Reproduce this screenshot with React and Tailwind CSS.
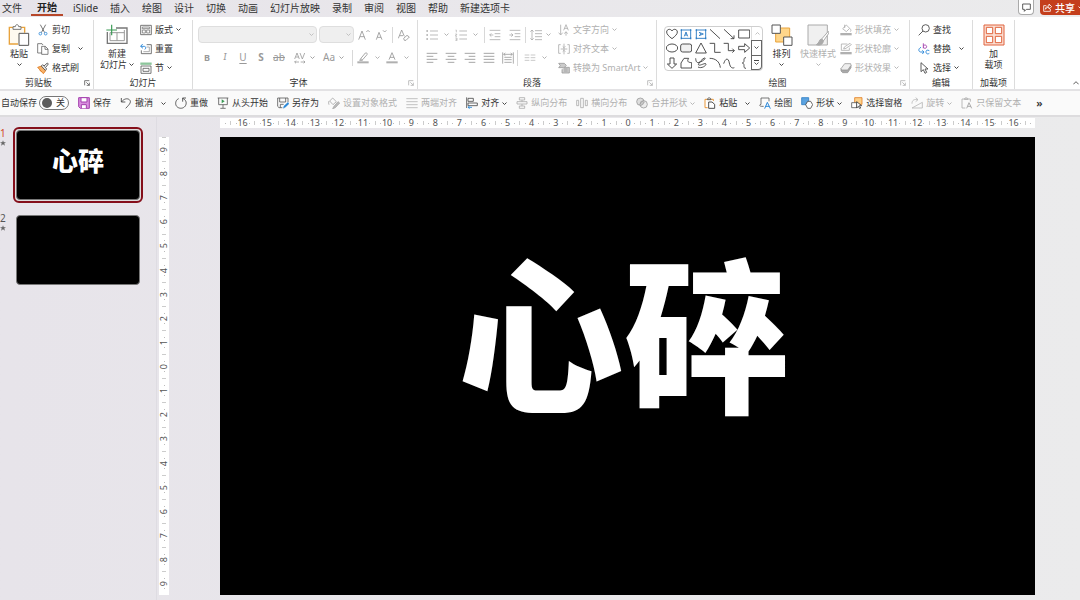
import { useState } from 'react';

// Small icons, drawn on a 36 x 36 grid
const ICONS = {
  cut: (
    <g fill="none" strokeWidth="2.4">
      <path d="M10 2l13 24M26 2L13 26" stroke="#555" />
      <circle cx="10" cy="29" r="4" stroke="#2b88d8" />
      <circle cx="26" cy="29" r="4" stroke="#2b88d8" />
    </g>
  ),
  copy: (
    <g fill="#fff" stroke="#555" strokeWidth="2.2">
      <path d="M16 30H2V2h13l3 4" />
      <path d="M14 10h11l8 8v16H14zM24 10v9h9" />
    </g>
  ),
  brush: (
    <g strokeLinejoin="round" strokeWidth="2.6">
      <path d="M2 16l12-4 12 14-7 9z" fill="#f7b26a" stroke="#e07b1f" />
      <path d="M8 24l6 6" stroke="#e07b1f" />
      <path d="M13 12l4-4 12 13-4 4z" fill="#fff" stroke="#444" />
      <path d="M21 12l10-9 3 3-8 10" fill="#fff" stroke="#444" />
    </g>
  ),
  layout: (
    <g fill="none" stroke="#555" strokeWidth="2.4">
      <path d="M2 4h32v28H2z" />
      <path d="M7 9h22v5H7zM7 18h9v9H7zM20 18h9v9h-9z" stroke="#777" />
    </g>
  ),
  reset: (
    <g fill="none" strokeWidth="2.4">
      <path d="M20 5h14v27H4V22" stroke="#555" />
      <path d="M20 12h8v14H10" stroke="#999" />
      <path d="M2 10h11c5 0 6 8 1 9M8 3L2 10l7 6" stroke="#2b88d8" strokeWidth="2.8" />
    </g>
  ),
  section: (
    <g fill="none" strokeWidth="2.4">
      <path d="M1 5h34" stroke="#8cc59b" strokeWidth="7" />
      <path d="M3 12h30v22H3zM9 19h18v9H9z" stroke="#555" />
    </g>
  ),
  save: (
    <g stroke="#a33fae" strokeWidth="3">
      <path d="M2 2h32v32H7l-5-5z" fill="#d98fdf" />
      <path d="M9 2h18v13H9zM10 34V23h15v11" fill="#fff" />
    </g>
  ),
  undo: <path d="M4 3v12h12M4 15C12 5 22 3 28 8c7 6 2 13-11 26" fill="none" stroke="#444" strokeWidth="2.6" />,
  redo: <path d="M33 3H23v11M23 4c9 4 13 12 9 21-4 8-14 11-22 7S0 19 4 11c2-3 4-5 7-6" fill="none" stroke="#444" strokeWidth="2.6" />,
  play: (
    <g fill="none" stroke="#555" strokeWidth="2.4">
      <path d="M2 3h32M5 3v20h26V3M18 23v10M10 34h16" />
      <path d="M14 7l9 6-9 6z" fill="#3a9a55" stroke="none" />
    </g>
  ),
  saveAs: (
    <g fill="none" strokeWidth="2.4">
      <path d="M16 32H6l-4-4V3h31v12" stroke="#555" />
      <path d="M8 3v12h18V3M10 32V22h10" stroke="#555" />
      <path d="M19 34l2-7 12-11 3 4-11 11z" fill="#2b88d8" stroke="#2b88d8" strokeWidth="1" />
    </g>
  ),
  format: (
    <g fill="none" stroke="#aaa" strokeWidth="2.6">
      <path d="M5 12l9-9 11 11-10 9zM3 12c-2 5-1 8 0 11" />
      <path d="M18 28l12-14 5 4-13 14-8 3z" fill="#bbb" />
    </g>
  ),
  justify: <path d="M1 5h34M1 14h34M1 23h34M1 32h34" stroke="#b4b4b4" strokeWidth="2.4" />,
  align: (
    <g fill="none" strokeWidth="2.4">
      <path d="M2 1v32M6 4h16v9H6zM6 18h28v8H6z" stroke="#444" />
      <path d="M18 31H6M11 27l-5 4 5 4" stroke="#2b88d8" strokeWidth="2.6" />
    </g>
  ),
  distV: <path d="M10 2h16v7H10zM3 14h30v7H3zM10 27h16v7H10zM18 9v5M18 21v6" fill="none" stroke="#aaa" strokeWidth="2.4" />,
  distH: <path d="M2 10h6v16H2zM14 4h8v28h-8zM28 10h6v16h-6z" fill="none" stroke="#aaa" strokeWidth="2.4" />,
  merge: (
    <g fill="#ddd" stroke="#999" strokeWidth="2.4">
      <circle cx="13" cy="14" r="11" />
      <circle cx="23" cy="22" r="11" fillOpacity=".5" />
      <path d="M23 11L12 22M25 15L15 26" fill="none" />
    </g>
  ),
  paste: (
    <g fill="#fff" strokeWidth="2.8">
      <path d="M11 32H3V7h25v5" stroke="#e8912d" />
      <path d="M10 8c0-7 11-7 11 0z" stroke="#555" />
      <path d="M14 15h10l8 7v12H14z" stroke="#444" />
    </g>
  ),
  drawBox: (
    <g fill="none" strokeWidth="2.4">
      <path d="M14 28H7c-6 0-6-6-1-6V3h24v10" stroke="#555" />
      <path d="M17 35l8-19 9 19M20 28h11" stroke="#2b88d8" strokeWidth="3" />
    </g>
  ),
  shape: (
    <g strokeWidth="2.4">
      <path d="M2 2h21v21H2z" fill="#5ba3e0" stroke="#2b7cc4" />
      <path d="M20 13h9l6 10-6 11h-9l-6-11z" fill="#fff" stroke="#444" strokeLinejoin="round" />
    </g>
  ),
  pane: (
    <g strokeWidth="2.4">
      <path d="M11 2h22v20H11z" fill="#ffd28a" stroke="#e07b1f" />
      <path d="M2 17h16v15H2z" fill="#fff" stroke="#555" />
      <path d="M17 14v19l5-5 4 7 3-2-4-7h7z" fill="#fff" stroke="#333" />
    </g>
  ),
  rotate: (
    <g fill="none" stroke="#b4b4b4" strokeWidth="2.4">
      <path d="M3 33L34 16v17z" />
      <path d="M3 20C3 9 10 6 20 8M14 2l7 6-7 6" />
    </g>
  ),
  pasteText: (
    <g fill="none" stroke="#aaa" strokeWidth="2.4">
      <path d="M13 33H3V6h25v8M10 7c0-6 11-6 11 0z" />
      <path d="M17 34l7-17 8 17M20 28h10" strokeWidth="3" />
    </g>
  ),
  textDir: (
    <g fill="none" stroke="#aaa" strokeWidth="2.4">
      <path d="M8 2v30M2 26l6 7 6-7" />
      <path d="M17 19l7-17 7 17M19 13h10M24 24v11M19 29l5-6 5 6" />
    </g>
  ),
  alignText: (
    <g fill="none" stroke="#aaa" strokeWidth="2.4">
      <path d="M8 5H2v26h6M28 5h6v26h-6M8 18h20M18 2v32M14 10l4 4 4-4M14 26l4-4 4 4" />
    </g>
  ),
  smartArt: (
    <g fill="#ccc" stroke="#999" strokeWidth="2.4">
      <path d="M2 4h17l6 6-6 7H2l5-6z" />
      <path d="M17 16h17v17H12V22" />
      <path d="M18 21h11M18 27h11" />
    </g>
  ),
  fill: (
    <g fill="none" stroke="#aaa" strokeWidth="2.4">
      <path d="M8 14L19 3l10 10-10 10zM14 2v10M30 14c4 4 3 7 1 9" />
      <path d="M1 27h34v7H1z" fill="#b0b0b0" stroke="none" />
    </g>
  ),
  outline: (
    <g fill="none" stroke="#aaa" strokeWidth="2.4">
      <path d="M28 14v8H4V3h18M11 18l2-6L30 1l4 4-16 11z" />
      <path d="M1 27h34v7H1z" fill="#b0b0b0" stroke="none" />
    </g>
  ),
  effect: (
    <g fill="#eee" stroke="#999" strokeWidth="2.4" strokeLinejoin="round">
      <path d="M3 20v7l5 5h15l10-15v-7L23 25H8z" fill="#aaa" />
      <path d="M14 5h18l1 5-10 14H5l-2-4z" />
    </g>
  ),
  find: <path d="M34 13a11 11 0 1 1-22 0 11 11 0 1 1 22 0M15 21L2 34" fill="none" stroke="#444" strokeWidth="2.6" />,
  replace: (
    <g fill="none" strokeWidth="2.8">
      <path d="M16 1v15M16 9c3-5 10-3 10 2s-7 7-10 2" stroke="#a33fae" />
      <path d="M34 23c-7-4-11 0-10 5s6 6 10 3" stroke="#2b88d8" />
      <path d="M9 13C0 17 1 26 8 27h9M13 22l5 5-5 6" stroke="#2b88d8" />
    </g>
  ),
  select: <path d="M9 2v27l7-6 5 11 5-3-5-10h9z" fill="none" stroke="#444" strokeWidth="2.6" strokeLinejoin="round" />,
  bullets: (
    <g stroke="#aaa" strokeWidth="2.4">
      <path d="M12 6h24M12 18h24M12 30h24" />
      <path d="M1 6h5M1 18h5M1 30h5" strokeWidth="5" />
    </g>
  ),
  numbers: (
    <g stroke="#aaa" strokeWidth="2.4" fill="none">
      <path d="M13 6h23M13 18h23M13 30h23" />
      <path d="M2 3h2v7M1 15h4v3H2v4h4M1 27h5v8H1M2 31h4" strokeWidth="2" />
    </g>
  ),
  outdent: <path d="M2 4h32M17 14h17M17 23h17M2 32h32M13 18H2M7 13l-5 5 5 5" fill="none" stroke="#aaa" strokeWidth="2.4" />,
  indent: <path d="M2 4h32M17 14h17M17 23h17M2 32h32M1 18h11M7 13l5 5-5 5" fill="none" stroke="#aaa" strokeWidth="2.4" />,
  spacing: <path d="M15 5h21M15 14h21M15 23h21M15 32h21M6 3v30M1 8l5-5 5 5M1 28l5 5 5-5" fill="none" stroke="#aaa" strokeWidth="2.4" />,
  left: <path d="M2 4h32M2 13h20M2 22h32M2 31h20" stroke="#999" strokeWidth="2.6" />,
  center: <path d="M2 4h32M8 13h20M2 22h32M8 31h20" stroke="#999" strokeWidth="2.6" />,
  right: <path d="M2 4h32M14 13h20M2 22h32M14 31h20" stroke="#999" strokeWidth="2.6" />,
  full: <path d="M2 4h32M2 13h32M2 22h32M2 31h32" stroke="#999" strokeWidth="2.6" />,
  spread: <path d="M2 1v34M34 1v34M5 7h26M10 3L5 7l5 4M26 3l5 4-5 4M7 16h22M7 23h22M7 31h22" fill="none" stroke="#999" strokeWidth="2.4" />,
  columns: <path d="M2 9h14M2 17h14M2 25h14M20 9h14M20 17h14M20 25h14" stroke="#bbb" strokeWidth="2.4" />,
  grow: <path d="M2 32L12 6l10 26M6 23h13M25 9l5-5 5 5" fill="none" stroke="#999" strokeWidth="2.6" />,
  shrink: <path d="M4 32l8-22 9 22M7 25h11M24 4l5 5 5-5" fill="none" stroke="#999" strokeWidth="2.6" />,
  clear: (
    <g fill="none" stroke="#999" strokeWidth="2.6">
      <path d="M1 28L11 3l8 19M5 20h10" />
      <path d="M17 28l10-9 7 5-10 10h-5z" />
    </g>
  ),
  highlight: (
    <g fill="none" stroke="#999" strokeWidth="2.6">
      <path d="M11 21l-3 4h9M11 20L25 3c3-2 7 1 5 5L17 23z" />
      <path d="M1 28h34v6H1z" fill="#b0b0b0" stroke="none" />
    </g>
  ),
  fontColor: (
    <g fill="none" stroke="#999" strokeWidth="2.6">
      <path d="M9 23l9-21 9 21M12 16h12" />
      <path d="M1 28h34v6H1z" fill="#b0b0b0" stroke="none" />
    </g>
  ),
  charSpacing: <path d="M2 21L9 3l7 18M5 15h9M18 3l7 18 7-18M2 30h13M6 26l-4 4 4 4M20 30h13M29 26l4 4-4 4" fill="none" stroke="#999" strokeWidth="2.4" />,
};

const SHAPES = [
  <path d="M18 32C8 24 2 19 2 12 2 3 14 1 18 9c4-8 16-6 16 3 0 7-6 12-16 20z" />,
  <g stroke="#2b7cc4"><path d="M4 6h28v25H4zM13 25l5-13 5 13M15 21h6" /><path d="M2 6h4M30 6h4M2 31h4M30 31h4" strokeWidth="5" /></g>,
  <g stroke="#2b7cc4"><path d="M4 6h28v25H4zM12 13l13 5-13 5M16 15v6" /><path d="M2 6h4M30 6h4M2 31h4M30 31h4" strokeWidth="5" /></g>,
  <path d="M3 4l30 28" />,
  <path d="M3 4l30 28M33 22v10H23" />,
  <path d="M2 6h33v24H2z" />,
  <ellipse cx="18" cy="18" rx="17" ry="12" />,
  <rect x="2" y="6" width="33" height="24" rx="6" fill="#f1f1f1" />,
  <path d="M18 3l16 30H2z" />,
  <path d="M2 4h15v27h18" />,
  <path d="M2 4h14v22h18M28 20l6 6-6 6" />,
  <path d="M2 13h18V5l15 13-15 13v-8H2z" />,
  <path d="M12 3h12v18h8L18 34 4 21h8z" />,
  <path d="M3 33V18L12 4h14c-5 8-4 12 9 13v16z" />,
  <path d="M2 4c1 12 4 15 14 11S34 3 29 3 7 21 11 24s21-8 22-3-14 15-24 9" />,
  <path d="M2 4c18 0 30 10 32 28" />,
  <path d="M2 20C8 2 16 2 19 18s10 16 15 14" />,
  <path d="M24 2c-6 0-6 3-6 8s-1 7-5 8c4 1 5 3 5 8s0 8 6 8" />,
];

const Icon = ({ name }) => (
  <svg viewBox="0 0 36 36" className="h-3 w-3 shrink-0">{ICONS[name]}</svg>
);

const Chevron = ({ up }) => (
  <svg viewBox="0 0 10 6" className="h-[3px] w-[5px] shrink-0" fill="none" stroke="currentColor" strokeWidth="1.8">
    <path d={up ? 'M1 5l4-4 4 4' : 'M1 1l4 4 4-4'} />
  </svg>
);

const Divider = () => <span className="h-4 w-px shrink-0 bg-[#d8d8d8]" />;

// Icon with text beside it; "split" puts the arrow further away
function SmallButton({ icon, text, arrow, split, disabled, className = '' }) {
  return (
    <button
      disabled={disabled}
      className={`flex h-[19px] shrink-0 items-center gap-[3px] whitespace-nowrap ${disabled ? 'text-[#b0b0b0]' : 'text-[#333]'} ${className}`}
    >
      <Icon name={icon} />
      <span>{text}</span>
      {split && <span className="w-0.5" />}
      {(arrow || split) && <Chevron />}
    </button>
  );
}

function IconButton({ icon, label, arrow }) {
  return (
    <button disabled aria-label={label} className="flex shrink-0 items-center gap-1.5 text-[#aaa]">
      <Icon name={icon} />
      {arrow && <Chevron />}
    </button>
  );
}

function Group({ title, launcher, muted, className, children }) {
  return (
    <section className={`flex shrink-0 flex-col border-r border-[#dcdcdc] ${className}`}>
      <div className="flex h-[57px]">{children}</div>
      <div className="flex h-3 items-center leading-3">
        <span className="flex-1 text-center">{title}</span>
        {launcher && (
          <button aria-label={`${title}设置`} className={`flex w-[18px] justify-end pr-[3px] ${muted ? 'text-[#b0b0b0]' : 'text-[#555]'}`}>
            <svg viewBox="0 0 18 18" className="h-1.5 w-1.5" fill="none" stroke="currentColor" strokeWidth="2.4">
              <path d="M2 16V2h14M7 7l9 9M16 8v8H8" />
            </svg>
          </button>
        )}
      </div>
    </section>
  );
}

function LargeButton({ icon, lines, arrow, inlineArrow, disabled, className }) {
  return (
    <button
      disabled={disabled}
      className={`flex shrink-0 flex-col items-center self-start pt-1 leading-[11px] whitespace-nowrap ${disabled ? 'text-[#b0b0b0]' : 'text-[#333]'} ${className}`}
    >
      {icon}
      <span className="mt-0.5">{lines[0]}</span>
      {lines[1] && (
        <span className="flex items-center gap-0.5">
          {lines[1]}
          {inlineArrow && <Chevron />}
        </span>
      )}
      {arrow && <span className="flex h-[11px] items-center"><Chevron /></span>}
    </button>
  );
}

const pasteIcon = (
  <svg viewBox="0 0 66 66" className="h-[22px] w-[22px]" fill="#fff" strokeWidth="3">
    <path d="M30 60H4V10h46v16" fill="#fffaf0" stroke="#e8a33d" strokeWidth="4" />
    <path d="M15 16v-8h7c0-8 10-8 10 0h7v8z" stroke="#777" />
    <path d="M33 28h29v36H33z" stroke="#555" />
  </svg>
);

const newSlideIcon = (
  <svg viewBox="0 0 66 66" className="h-[22px] w-[22px]" fill="none" strokeWidth="3">
    <path d="M4 24v34h59V12H30" stroke="#777" strokeWidth="4" />
    <path d="M12 26h43M12 26v24h43V18M33 26v24" stroke="#999" />
    <path d="M17 2v32M1 18h32" stroke="#3a9a55" strokeWidth="3.5" />
  </svg>
);

const arrangeIcon = (
  <svg viewBox="0 0 66 66" className="h-[22px] w-[22px]" fill="#fff" strokeWidth="3">
    <path d="M14 12h42v42H14z" fill="#ffd68a" stroke="#e8a33d" />
    <path d="M3 3h25v25H3zM38 39h25v25H38z" stroke="#555" />
  </svg>
);

const styleIcon = (
  <svg viewBox="0 0 66 66" className="h-[22px] w-[22px]" fill="#eee" stroke="#aaa" strokeWidth="3">
    <path d="M3 3h58v60H3z" fill="#f0f0f0" />
    <path d="M64 22L44 45l5 6 17-24z" fill="#fff" />
    <path d="M44 45c-8 0-6 12-16 17 12 4 20-2 21-11z" fill="#aaa" />
  </svg>
);

const addInIcon = (
  <svg viewBox="0 0 66 66" className="h-[22px] w-[22px]" fill="#fff" stroke="#e0633c" strokeWidth="3">
    <path d="M3 3h60v60H3z" fill="#fbe0d5" />
    <path d="M10 10h19v19H10zM37 10h19v19H37zM10 37h19v19H10zM37 37h19v19H37z" />
  </svg>
);

const TABS = ['iSlide', '插入', '绘图', '设计', '切换', '动画', '幻灯片放映', '录制', '审阅', '视图', '帮助', '新建选项卡'];

function TabBar() {
  return (
    <header className="flex h-[17px] items-start justify-between text-[10px] leading-[14px] text-[#333]">
      <nav className="flex whitespace-nowrap">
        <button className="mr-[9px] ml-0.5">文件</button>
        <button className="mr-1 h-4 border-b-2 border-[#b7472a] px-1.5 font-bold text-[#222]">开始</button>
        {TABS.map((tab) => (
          <button key={tab} className="px-1.5">{tab}</button>
        ))}
      </nav>
      <div className="flex shrink-0 gap-1.5">
        <button aria-label="批注" className="flex h-[15px] w-4 items-center justify-center rounded-b border border-t-0 border-[#aaa] bg-white">
          <svg viewBox="0 0 27 27" className="h-[9px] w-[9px]" fill="none" stroke="#444" strokeWidth="2.6">
            <path d="M2 3h23v16H13l-6 6v-6H2z" />
          </svg>
        </button>
        <button className="flex h-[15px] w-10 items-center gap-[3px] overflow-hidden rounded-bl bg-[#c43e1c] pl-[3px] font-medium whitespace-nowrap text-white">
          <svg viewBox="0 0 27 27" className="h-[9px] w-[9px] shrink-0" fill="none" stroke="#fff" strokeWidth="2.4">
            <path d="M10 8H2v17h20v-7M7 19c1-8 6-10 11-10V3l8 8-8 7v-5c-5 0-8 1-11 6z" />
          </svg>
          <span>共享</span>
          <Chevron />
        </button>
      </div>
    </header>
  );
}

function FontGroup() {
  return (
    <Group title="字体" launcher muted className="w-[225px] pl-[5px]">
      <div className="flex flex-col gap-1.5 pt-1.5 text-[#999]">
        <div className="flex h-[17px] items-center gap-0.5">
          <label className="flex h-[17px] w-[119px] items-center rounded border border-[#dedede] bg-[#efefef] pr-0.5 text-[#bbb]">
            <select disabled aria-label="字体" className="min-w-0 flex-1 appearance-none" />
            <Chevron />
          </label>
          <label className="flex h-[17px] w-[35px] items-center rounded border border-[#dedede] bg-[#efefef] pr-0.5 text-[#bbb]">
            <select disabled aria-label="字号" className="min-w-0 flex-1 appearance-none" />
            <Chevron />
          </label>
          <div className="flex items-center gap-[5px] pl-0.5">
            <IconButton icon="grow" label="增大字号" />
            <IconButton icon="shrink" label="减小字号" />
            <Divider />
            <IconButton icon="clear" label="清除格式" />
          </div>
        </div>
        <div className="flex h-[17px] items-center">
          <button disabled className="w-[18px] font-bold">B</button>
          <button disabled className="w-[18px] font-serif text-[10px] italic">I</button>
          <button disabled className="w-[18px] text-[10px] underline underline-offset-2">U</button>
          <button disabled className="w-[18px] text-[10px] font-bold">S</button>
          <button disabled className="w-[18px] text-[10px] line-through">ab</button>
          <div className="flex items-center gap-2 pl-1.5">
            <button disabled aria-label="字符间距" className="flex items-center gap-1">
              <Icon name="charSpacing" />
              <Chevron />
            </button>
            <button disabled className="flex items-center gap-1">
              <span className="text-[10px]">Aa</span>
              <Chevron />
            </button>
            <Divider />
          </div>
          <div className="flex items-center gap-1.5 pl-1">
            <IconButton icon="highlight" label="突出显示" arrow />
            <IconButton icon="fontColor" label="字体颜色" arrow />
          </div>
        </div>
      </div>
    </Group>
  );
}

function ParagraphGroup() {
  return (
    <Group title="段落" launcher muted className="w-[239px] pl-2">
      <div className="flex w-[132px] flex-col gap-1.5 pt-1.5">
        <div className="flex h-[17px] items-center gap-1">
          <div className="flex items-center gap-1.5">
            <IconButton icon="bullets" label="项目符号" arrow />
            <IconButton icon="numbers" label="编号" arrow />
            <Divider />
          </div>
          <IconButton icon="outdent" label="减少缩进" />
          <div className="flex items-center gap-1 pl-1">
            <IconButton icon="indent" label="增加缩进" />
            <Divider />
            <button disabled aria-label="行距" className="flex items-center gap-1 text-[#aaa]">
              <Icon name="spacing" />
              <Chevron />
            </button>
          </div>
        </div>
        <div className="flex h-[17px] items-center gap-[7px]">
          <IconButton icon="left" label="左对齐" />
          <IconButton icon="center" label="居中" />
          <IconButton icon="right" label="右对齐" />
          <IconButton icon="full" label="两端对齐" />
          <IconButton icon="spread" label="分散对齐" />
          <div className="-ml-1 flex items-center gap-1.5">
            <Divider />
            <IconButton icon="columns" label="分栏" arrow />
          </div>
        </div>
      </div>
      <div>
        <SmallButton icon="textDir" text="文字方向" arrow disabled />
        <SmallButton icon="alignText" text="对齐文本" arrow disabled />
        <SmallButton icon="smartArt" text="转换为 SmartArt" arrow disabled />
      </div>
    </Group>
  );
}

function DrawingGroup() {
  return (
    <Group title="绘图" launcher muted className="w-[253px] pl-[7px]">
      <div className="mt-1.5 flex h-[45px] w-[99px] rounded border border-[#cfcfcf]">
        <div className="grid flex-1 grid-cols-6 place-items-center">
          {SHAPES.map((shape, i) => (
            <svg key={i} viewBox="0 0 36 36" className="h-3 w-3" fill="none" stroke="#444" strokeWidth="2.8">
              {shape}
            </svg>
          ))}
        </div>
        <div className="flex w-[11px] flex-col text-[#444]">
          <button aria-label="上一行" className="flex flex-1 items-center justify-center border-l border-[#ddd] text-[#bbb]"><Chevron up /></button>
          <button aria-label="下一行" className="flex flex-1 items-center justify-center border border-[#666]"><Chevron /></button>
          <button aria-label="其他形状" className="flex flex-1 flex-col items-center justify-center gap-px rounded-br border border-t-0 border-[#666]">
            <span className="h-px w-[5px] bg-[#444]" />
            <Chevron />
          </button>
        </div>
      </div>
      <LargeButton icon={arrangeIcon} lines={['排列']} arrow className="w-[37px]" />
      <LargeButton icon={styleIcon} lines={['快速样式']} arrow disabled className="mr-1 w-[36px]" />
      <div>
        <SmallButton icon="fill" text="形状填充" arrow disabled />
        <SmallButton icon="outline" text="形状轮廓" arrow disabled />
        <SmallButton icon="effect" text="形状效果" arrow disabled />
      </div>
    </Group>
  );
}

function Ribbon() {
  return (
    <div className="flex border-b-2 border-[#e3e2e4] bg-white pt-[3px] text-[9px] text-[#333]">
      <Group title="剪贴板" launcher className="w-[94px] pl-0.5">
        <LargeButton icon={pasteIcon} lines={['粘贴']} arrow className="mr-px w-[34px]" />
        <div>
          <SmallButton icon="cut" text="剪切" />
          <SmallButton icon="copy" text="复制" split />
          <SmallButton icon="brush" text="格式刷" />
        </div>
      </Group>
      <Group title="幻灯片" className="w-[99px] px-[3px]">
        <LargeButton icon={newSlideIcon} lines={['新建', '幻灯片']} inlineArrow className="mr-[3px] w-[40px]" />
        <div>
          <SmallButton icon="layout" text="版式" arrow />
          <SmallButton icon="reset" text="重置" />
          <SmallButton icon="section" text="节" arrow />
        </div>
      </Group>
      <FontGroup />
      <ParagraphGroup />
      <DrawingGroup />
      <Group title="编辑" className="w-[63px] px-2">
        <div>
          <SmallButton icon="find" text="查找" />
          <SmallButton icon="replace" text="替换" split />
          <SmallButton icon="select" text="选择" arrow />
        </div>
      </Group>
      <Group title="加载项" className="w-[42px]">
        <LargeButton icon={addInIcon} lines={['加', '载项']} className="w-full" />
      </Group>
      <button aria-label="折叠功能区" className="mr-px mb-1 ml-auto self-end text-[#444]">
        <svg viewBox="0 0 18 12" className="h-1 w-1.5" fill="none" stroke="currentColor" strokeWidth="2.6">
          <path d="M1 10l8-8 8 8" />
        </svg>
      </button>
    </div>
  );
}

const QUICK_ITEMS = [
  { icon: 'save', text: '保存' },
  { icon: 'undo', text: '撤消', split: true },
  { icon: 'redo', text: '重做' },
  { icon: 'play', text: '从头开始' },
  { icon: 'saveAs', text: '另存为' },
  { icon: 'format', text: '设置对象格式', disabled: true },
  { icon: 'justify', text: '两端对齐', disabled: true },
  { icon: 'align', text: '对齐', arrow: true },
  { icon: 'distV', text: '纵向分布', disabled: true },
  { icon: 'distH', text: '横向分布', disabled: true },
  { icon: 'merge', text: '合并形状', arrow: true, disabled: true },
  { icon: 'paste', text: '粘贴', split: true },
  { icon: 'drawBox', text: '绘图' },
  { icon: 'shape', text: '形状', arrow: true },
  { icon: 'pane', text: '选择窗格' },
  { icon: 'rotate', text: '旋转', arrow: true, disabled: true },
  { icon: 'pasteText', text: '只保留文本', disabled: true },
];

function QuickBar() {
  const [autoSave, setAutoSave] = useState(false);

  return (
    <div className="flex h-[26px] items-center gap-[9px] border-b-2 border-[#dddcde] bg-[#fafafa] pl-px text-[9px] whitespace-nowrap text-[#333]">
      <label className="flex shrink-0 items-center gap-0.5">
        自动保存
        <span className={`flex h-[14px] w-[30px] items-center gap-1 rounded-full border border-[#777] bg-white px-0.5 ${autoSave ? 'flex-row-reverse' : ''}`}>
          <input
            type="checkbox"
            checked={autoSave}
            onChange={(e) => setAutoSave(e.target.checked)}
            className="h-[10px] w-[10px] appearance-none rounded-full bg-[#5c5c5c]"
          />
          {autoSave ? '开' : '关'}
        </span>
      </label>
      {QUICK_ITEMS.map((item) => (
        <SmallButton key={item.text} {...item} />
      ))}
      <button aria-label="更多" className="ml-1.5 text-[11px] leading-3 font-semibold">»</button>
    </div>
  );
}

const THUMBS = [
  { id: 1, text: '心碎' },
  { id: 2, text: '' },
];

function ThumbPanel({ active, onSelect }) {
  return (
    <aside className="flex w-[157px] shrink-0 flex-col gap-[9px] border-r border-[#dedce2] pt-[10px]">
      {THUMBS.map(({ id, text }) => (
        <div key={id} className="flex">
          <div className={`w-[13px] text-[10px] leading-3 ${active === id ? 'text-[#d24726]' : 'text-[#555]'}`}>
            <div>{id}</div>
            <svg viewBox="0 0 24 24" className="mt-px h-1.5 w-1.5" fill="#666">
              <path d="M12 1l3 8h9l-7 5 3 9-8-6-8 6 3-9-7-5h9z" />
            </svg>
          </div>
          <button
            aria-label={`幻灯片 ${id}`}
            onClick={() => onSelect(id)}
            className={`w-[130px] rounded-md border-2 p-px ${active === id ? 'border-[#850f1b] bg-[#ddd]' : 'border-transparent'}`}
          >
            <span className="flex aspect-video items-center justify-center rounded-sm border border-[#777] bg-black pb-2 text-[26px] leading-none font-black text-white">
              {text}
            </span>
          </button>
        </div>
      ))}
    </aside>
  );
}

const range = (n) => Array.from({ length: n * 2 + 1 }, (_, i) => Math.abs(i - n));

function HorizontalRuler() {
  return (
    <div className="flex h-[10px] items-center bg-white text-[9px] leading-[10px] text-[#555]">
      <span className="flex w-[10px] justify-center"><i className="h-px w-px bg-[#bbb]" /></span>
      {range(16).map((n, i) => (
        <div key={i} className="flex min-w-0 flex-1 items-center">
          <i className="h-1 w-px bg-[#ccc]" />
          <div className="flex flex-1 items-center justify-center">
            <i className="h-px w-px bg-[#bbb]" />
            <span className="w-3 text-center">{n}</span>
            <i className="h-px w-px bg-[#bbb]" />
          </div>
        </div>
      ))}
      <i className="h-1 w-px bg-[#ccc]" />
      <span className="flex w-[9px] justify-center"><i className="h-px w-px bg-[#bbb]" /></span>
    </div>
  );
}

function VerticalRuler() {
  return (
    <div className="flex flex-col bg-white text-[9px] leading-[10px] text-[#555]">
      {range(9).map((n, i) => (
        <div key={i} className="flex min-h-0 flex-1 flex-col items-center">
          <i className="h-px w-1 bg-[#ccc]" />
          <div className="flex flex-1 flex-col items-center justify-center gap-0.5">
            <i className="h-px w-px bg-[#bbb]" />
            <span className="rotate-180 [writing-mode:vertical-rl]">{n}</span>
            <i className="h-px w-px bg-[#bbb]" />
          </div>
        </div>
      ))}
    </div>
  );
}

export default function App() {
  const [active, setActive] = useState(1);
  const slide = THUMBS.find((t) => t.id === active);

  return (
    <div className="flex min-h-screen flex-col overflow-hidden bg-linear-to-r from-[#e7e4ea] to-[#ebebec] font-['Noto_Sans','Noto_Sans_CJK_SC',sans-serif]">
      <TabBar />
      <Ribbon />
      <QuickBar />
      <div className="flex flex-1">
        <ThumbPanel active={active} onSelect={setActive} />
        <main className="grid min-w-0 flex-1 grid-cols-[10px_1fr] content-start gap-x-[51px] gap-y-[9px] pt-px pr-[45px] pl-0.5">
          <span />
          <HorizontalRuler />
          <VerticalRuler />
          <div className="flex aspect-video items-center justify-center bg-black pr-2 pb-[60px]">
            <h1 className="text-[166px] leading-none font-black whitespace-nowrap text-white">{slide.text}</h1>
          </div>
        </main>
      </div>
    </div>
  );
}
